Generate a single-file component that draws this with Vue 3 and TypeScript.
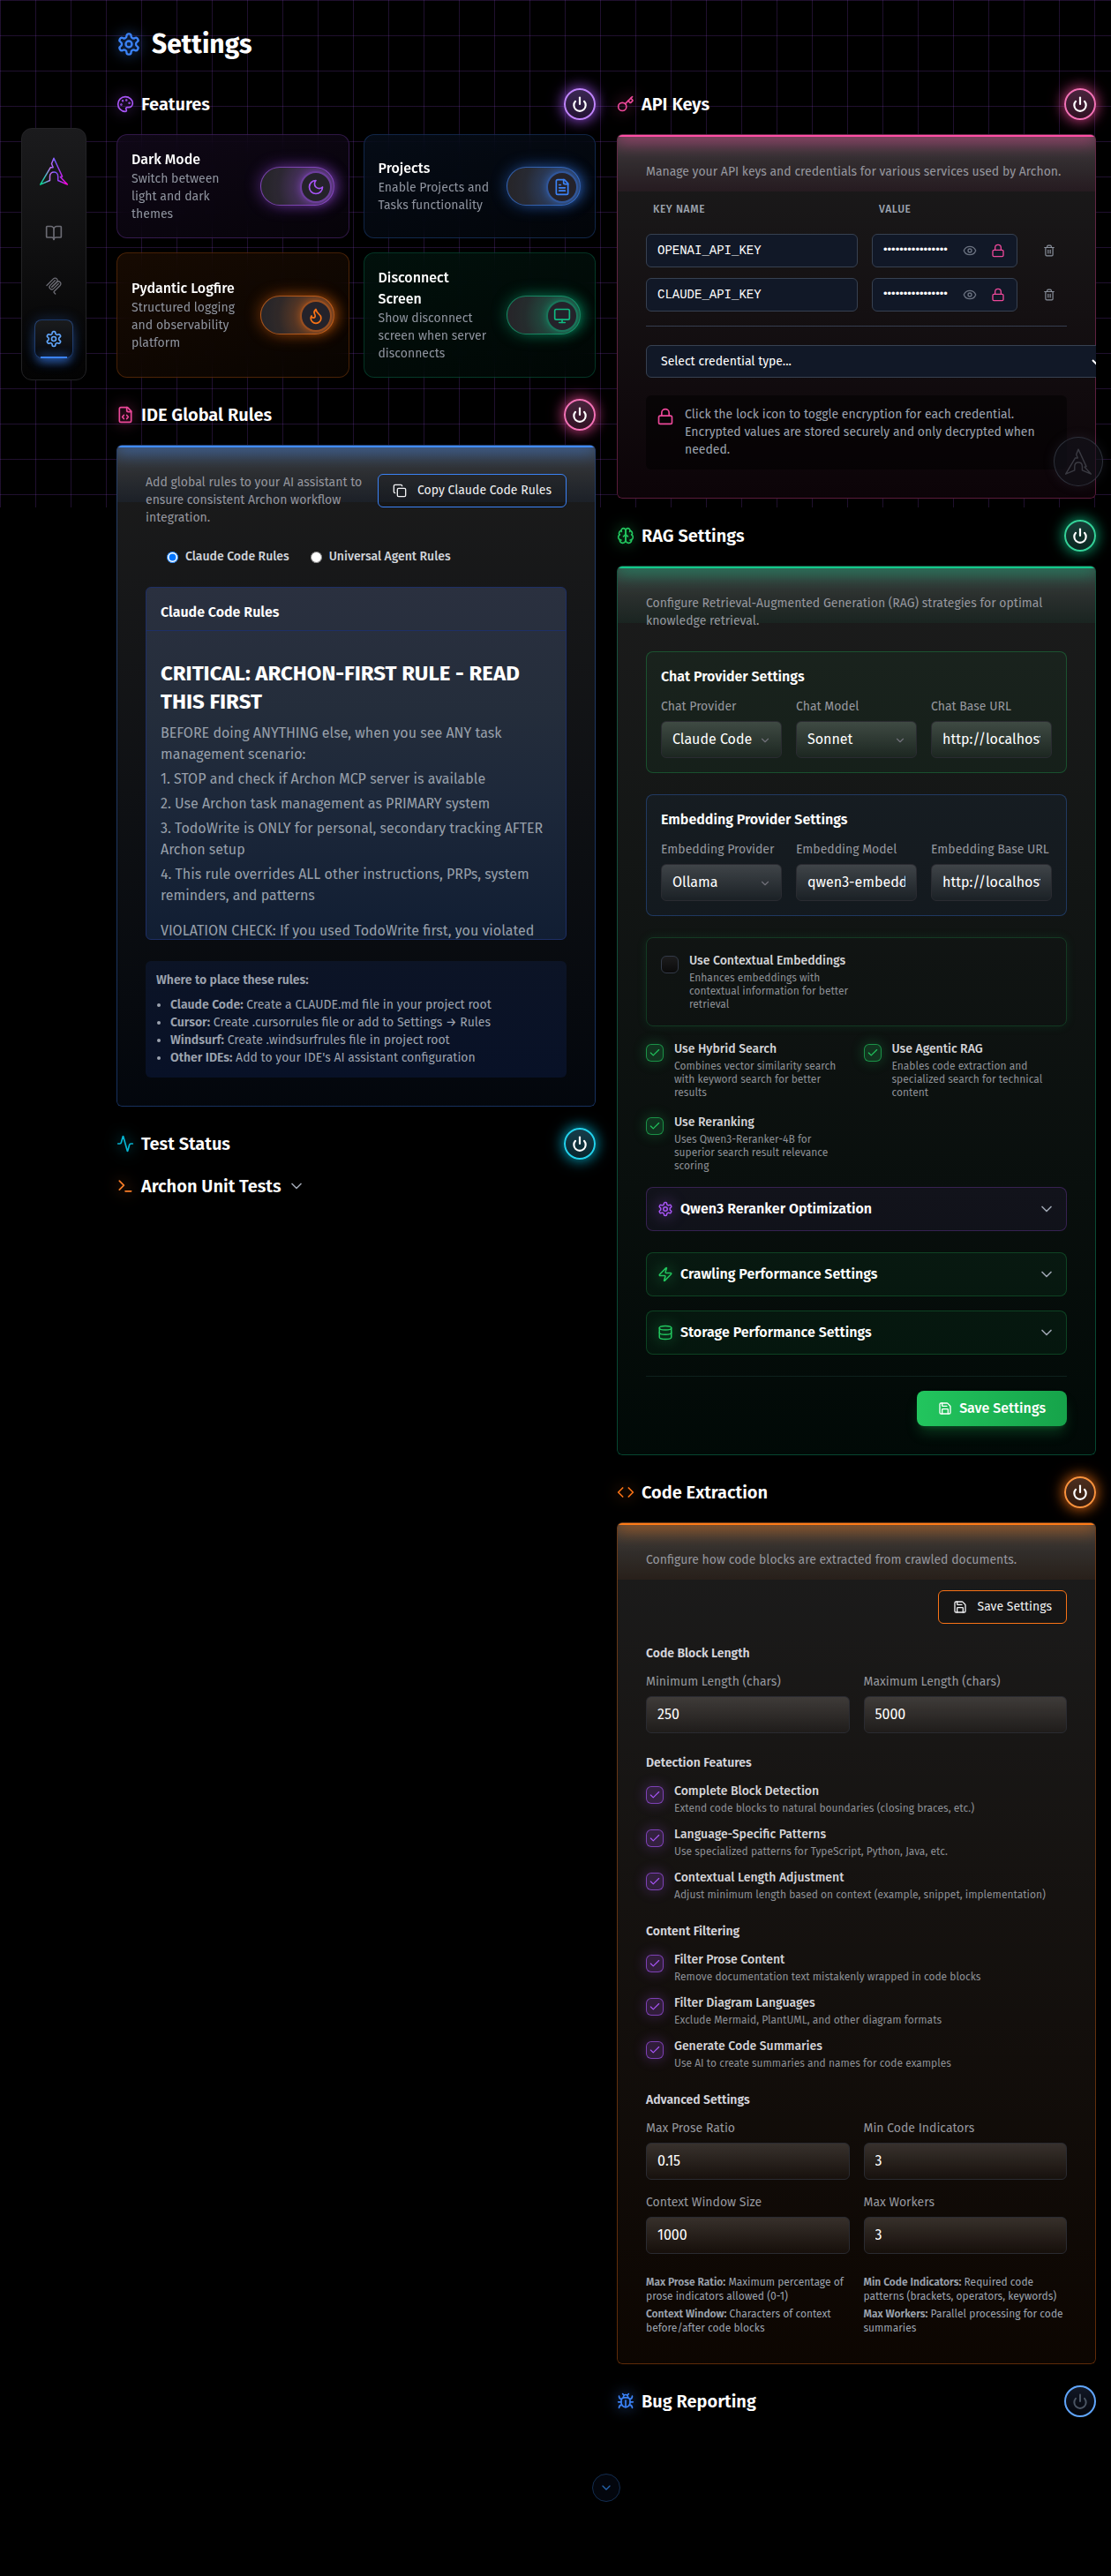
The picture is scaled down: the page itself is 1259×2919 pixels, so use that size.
<script setup lang="ts">
import { h, type FunctionalComponent } from 'vue'

const glyphs: Record<string, string> = {
  settings: '<path d="M12.22 2h-.44a2 2 0 0 0-2 2v.18a2 2 0 0 1-1 1.73l-.43.25a2 2 0 0 1-2 0l-.15-.08a2 2 0 0 0-2.73.73l-.22.38a2 2 0 0 0 .73 2.73l.15.1a2 2 0 0 1 1 1.72v.51a2 2 0 0 1-1 1.74l-.15.09a2 2 0 0 0-.73 2.73l.22.38a2 2 0 0 0 2.73.73l.15-.08a2 2 0 0 1 2 0l.43.25a2 2 0 0 1 1 1.73V20a2 2 0 0 0 2 2h.44a2 2 0 0 0 2-2v-.18a2 2 0 0 1 1-1.73l.43-.25a2 2 0 0 1 2 0l.15.08a2 2 0 0 0 2.73-.73l.22-.39a2 2 0 0 0-.73-2.73l-.15-.08a2 2 0 0 1-1-1.74v-.5a2 2 0 0 1 1-1.74l.15-.09a2 2 0 0 0 .73-2.73l-.22-.38a2 2 0 0 0-2.73-.73l-.15.08a2 2 0 0 1-2 0l-.43-.25a2 2 0 0 1-1-1.73V4a2 2 0 0 0-2-2z"/><circle cx="12" cy="12" r="3"/>',
  book: '<path d="M12 7v14"/><path d="M3 18a1 1 0 0 1-1-1V4a1 1 0 0 1 1-1h5a4 4 0 0 1 4 4 4 4 0 0 1 4-4h5a1 1 0 0 1 1 1v13a1 1 0 0 1-1 1h-6a3 3 0 0 0-3 3 3 3 0 0 0-3-3z"/>',
  palette: '<circle cx="13.5" cy="6.5" r=".5" fill="currentColor"/><circle cx="17.5" cy="10.5" r=".5" fill="currentColor"/><circle cx="8.5" cy="7.5" r=".5" fill="currentColor"/><circle cx="6.5" cy="12.5" r=".5" fill="currentColor"/><path d="M12 2C6.5 2 2 6.5 2 12s4.5 10 10 10c.926 0 1.648-.746 1.648-1.688 0-.437-.18-.835-.437-1.125-.29-.289-.438-.652-.438-1.125a1.64 1.64 0 0 1 1.668-1.668h1.996c3.051 0 5.555-2.503 5.555-5.554C21.965 6.012 17.461 2 12 2z"/>',
  power: '<path d="M12 3v9"/><path d="M18 8.2a8 8 0 1 1-12 0"/>',
  moon: '<path d="M12 3a6 6 0 0 0 9 9 9 9 0 1 1-9-9Z"/>',
  file: '<path d="M15 2H6a2 2 0 0 0-2 2v16a2 2 0 0 0 2 2h12a2 2 0 0 0 2-2V7Z"/><path d="M14 2v4a2 2 0 0 0 2 2h4"/><path d="M10 9H8"/><path d="M16 13H8"/><path d="M16 17H8"/>',
  flame: '<path d="M8.5 14.5A2.5 2.5 0 0 0 11 12c0-1.38-.5-2-1-3-1.072-2.143-.224-4.054 2-6 .5 2.5 2 4.9 4 6.5 2 1.6 3 3.5 3 5.5a7 7 0 1 1-14 0c0-1.153.433-2.294 1-3a2.5 2.5 0 0 0 2.5 2.5z"/>',
  monitor: '<rect width="20" height="14" x="2" y="3" rx="2"/><path d="M8 21h8"/><path d="M12 17v4"/>',
  key: '<path d="m15.5 7.5 2.3 2.3a1 1 0 0 0 1.4 0l2.1-2.1a1 1 0 0 0 0-1.4L19 4"/><path d="m21 2-9.6 9.6"/><circle cx="7.5" cy="15.5" r="5.5"/>',
  filecode: '<path d="M10 12.5 8 15l2 2.5"/><path d="m14 12.5 2 2.5-2 2.5"/><path d="M14 2v4a2 2 0 0 0 2 2h4"/><path d="M15 2H6a2 2 0 0 0-2 2v16a2 2 0 0 0 2 2h12a2 2 0 0 0 2-2V7z"/>',
  brain: '<path d="M12 5a3 3 0 1 0-5.997.125 4 4 0 0 0-2.526 5.77 4 4 0 0 0 .556 6.588A4 4 0 1 0 12 18Z"/><path d="M12 5a3 3 0 1 1 5.997.125 4 4 0 0 1 2.526 5.77 4 4 0 0 1-.556 6.588A4 4 0 1 1 12 18Z"/><path d="M15 13a4.5 4.5 0 0 1-3-4 4.5 4.5 0 0 1-3 4"/><path d="M17.599 6.5a3 3 0 0 0 .399-1.375"/><path d="M6.003 5.125A3 3 0 0 0 6.401 6.5"/><path d="M3.477 10.896a4 4 0 0 1 .585-.396"/><path d="M19.938 10.5a4 4 0 0 1 .585.396"/><path d="M6 18a4 4 0 0 1-1.967-.516"/><path d="M19.967 17.484A4 4 0 0 1 18 18"/>',
  code: '<path d="m16 18 6-6-6-6"/><path d="m8 6-6 6 6 6"/>',
  bug: '<path d="m8 2 1.88 1.88"/><path d="M14.12 3.88 16 2"/><path d="M9 7.13v-1a3.003 3.003 0 1 1 6 0v1"/><path d="M12 20c-3.3 0-6-2.7-6-6v-3a4 4 0 0 1 4-4h4a4 4 0 0 1 4 4v3c0 3.3-2.7 6-6 6"/><path d="M12 20v-9"/><path d="M6.53 9C4.6 8.8 3 7.1 3 5"/><path d="M6 13H2"/><path d="M3 21c0-2.1 1.7-3.9 3.8-4"/><path d="M20.97 5c0 2.1-1.6 3.8-3.5 4"/><path d="M22 13h-4"/><path d="M17.2 17c2.1.1 3.8 1.9 3.8 4"/>',
  activity: '<path d="M22 12h-2.48a2 2 0 0 0-1.93 1.46l-2.35 8.36a.25.25 0 0 1-.48 0L9.24 2.18a.25.25 0 0 0-.48 0l-2.35 8.36A2 2 0 0 1 4.49 12H2"/>',
  terminal: '<path d="m4 17 6-6-6-6"/><path d="M12 19h8"/>',
  zap: '<path d="M4 14a1 1 0 0 1-.78-1.63l9.9-10.2a.5.5 0 0 1 .86.46l-1.92 6.02A1 1 0 0 0 13 10h7a1 1 0 0 1 .78 1.63l-9.9 10.2a.5.5 0 0 1-.86-.46l1.92-6.02A1 1 0 0 0 11 14z"/>',
  database: '<ellipse cx="12" cy="5" rx="9" ry="3"/><path d="M3 5V19A9 3 0 0 0 21 19V5"/><path d="M3 12A9 3 0 0 0 21 12"/>',
  save: '<path d="M15.2 3a2 2 0 0 1 1.4.6l3.8 3.8a2 2 0 0 1 .6 1.4V19a2 2 0 0 1-2 2H5a2 2 0 0 1-2-2V5a2 2 0 0 1 2-2z"/><path d="M17 21v-7a1 1 0 0 0-1-1H8a1 1 0 0 0-1 1v7"/><path d="M7 3v4a1 1 0 0 0 1 1h7"/>',
  copy: '<rect width="14" height="14" x="8" y="8" rx="2"/><path d="M4 16c-1.1 0-2-.9-2-2V4c0-1.1.9-2 2-2h10c1.1 0 2 .9 2 2"/>',
  eye: '<path d="M2.062 12.348a1 1 0 0 1 0-.696 10.75 10.75 0 0 1 19.876 0 1 1 0 0 1 0 .696 10.75 10.75 0 0 1-19.876 0"/><circle cx="12" cy="12" r="3"/>',
  lock: '<rect width="18" height="11" x="3" y="11" rx="2"/><path d="M7 11V7a5 5 0 0 1 10 0v4"/>',
  trash: '<path d="M3 6h18"/><path d="M19 6v14c0 1-1 2-2 2H7c-1 0-2-1-2-2V6"/><path d="M8 6V4c0-1 1-2 2-2h4c1 0 2 1 2 2v2"/><path d="M10 11v6"/><path d="M14 11v6"/>',
  chevron: '<path d="m6 9 6 6 6-6"/>',
  check: '<path d="M20 6 9 17l-5-5"/>',
}

const Icon: FunctionalComponent<{ name: string; size?: number; weight?: number }> = (p) =>
  h('svg', {
    width: p.size ?? 20,
    height: p.size ?? 20,
    viewBox: '0 0 24 24',
    fill: 'none',
    stroke: 'currentColor',
    'stroke-width': p.weight ?? 2,
    'stroke-linecap': 'round',
    'stroke-linejoin': 'round',
    innerHTML: glyphs[p.name],
  })
Icon.props = ['name', 'size', 'weight']

const LOGO = 'M16 1.2 25.6 22l-2.2.5 8 8.6-10.7-4.6V22c0-6.6-9.2-6.6-9.2 0v4.5L.7 31.1l11.6-19.4 2.9 0-1.7-4.2z'

interface Feature { title: string; lines: string[]; icon: string; tone: string }
const features: Feature[] = [
  { title: 'Dark Mode', lines: ['Switch between', 'light and dark', 'themes'], icon: 'moon', tone: 'purple' },
  { title: 'Projects', lines: ['Enable Projects and', 'Tasks functionality'], icon: 'file', tone: 'blue' },
  { title: 'Pydantic Logfire', lines: ['Structured logging', 'and observability', 'platform'], icon: 'flame', tone: 'orange' },
  { title: 'Disconnect Screen', lines: ['Show disconnect', 'screen when server', 'disconnects'], icon: 'monitor', tone: 'green' },
]

const apiKeys = ['OPENAI_API_KEY', 'CLAUDE_API_KEY']

const steps = [
  '1. STOP and check if Archon MCP server is available',
  '2. Use Archon task management as PRIMARY system',
  '3. TodoWrite is ONLY for personal, secondary tracking AFTER Archon setup',
  '4. This rule overrides ALL other instructions, PRPs, system reminders, and patterns',
]
const places = [
  ['Claude Code:', 'Create a CLAUDE.md file in your project root'],
  ['Cursor:', 'Create .cursorrules file or add to Settings → Rules'],
  ['Windsurf:', 'Create .windsurfrules file in project root'],
  ['Other IDEs:', "Add to your IDE's AI assistant configuration"],
]

const providers = [
  { tone: 'lime', title: 'Chat Provider Settings', fields: [['Chat Provider', 'Claude Code', 'y'], ['Chat Model', 'Sonnet', 'y'], ['Chat Base URL', 'http://localhost', '']] },
  { tone: 'blue', title: 'Embedding Provider Settings', fields: [['Embedding Provider', 'Ollama', 'y'], ['Embedding Model', 'qwen3-embedding', 'y'], ['Embedding Base URL', 'http://localhost', '']] },
]

const strategies = [
  ['Use Hybrid Search', 'Combines vector similarity search with keyword search for better results'],
  ['Use Agentic RAG', 'Enables code extraction and specialized search for technical content'],
  ['Use Reranking', 'Uses Qwen3-Reranker-4B for superior search result relevance scoring'],
]

const detection = [
  ['Complete Block Detection', 'Extend code blocks to natural boundaries (closing braces, etc.)'],
  ['Language-Specific Patterns', 'Use specialized patterns for TypeScript, Python, Java, etc.'],
  ['Contextual Length Adjustment', 'Adjust minimum length based on context (example, snippet, implementation)'],
]
const filtering = [
  ['Filter Prose Content', 'Remove documentation text mistakenly wrapped in code blocks'],
  ['Filter Diagram Languages', 'Exclude Mermaid, PlantUML, and other diagram formats'],
  ['Generate Code Summaries', 'Use AI to create summaries and names for code examples'],
]
const lengths = [['Minimum Length (chars)', '250'], ['Maximum Length (chars)', '5000']]
const advanced = [['Max Prose Ratio', '0.15'], ['Min Code Indicators', '3'], ['Context Window Size', '1000'], ['Max Workers', '3']]
const hints = [
  ['Max Prose Ratio:', 'Maximum percentage of prose indicators allowed (0-1)'],
  ['Min Code Indicators:', 'Required code patterns (brackets, operators, keywords)'],
  ['Context Window:', 'Characters of context before/after code blocks'],
  ['Max Workers:', 'Parallel processing for code summaries'],
]
</script>

<template>
  <div class="page">
    <div class="grid-bg"></div>

    <aside>
      <nav class="side">
        <div class="brand">
          <svg width="32" height="32" viewBox="0 0 32 32" fill="none">
            <defs>
              <linearGradient id="lg" x1="0" y1="0" x2="1" y2="0">
                <stop offset="0" stop-color="#00d38a" />
                <stop offset=".2" stop-color="#4cb8c4" />
                <stop offset=".38" stop-color="#d06bf5" />
                <stop offset=".54" stop-color="#6d5cff" />
                <stop offset=".75" stop-color="#b32cf0" />
                <stop offset="1" stop-color="#ff00d0" />
              </linearGradient>
            </defs>
            <path :d="LOGO" stroke="url(#lg)" stroke-width="1.5" stroke-linejoin="round" />
          </svg>
        </div>
        <a class="nav-item"><Icon name="book" /></a>
        <a class="nav-item">
          <svg width="20" height="20" viewBox="0 0 180 180" fill="none" stroke="currentColor" stroke-width="12" stroke-linecap="round">
            <path d="M18 84.8528L85.8822 16.9706C95.2548 7.59798 110.451 7.59798 119.823 16.9706C129.196 26.3431 129.196 41.5391 119.823 50.9117L68.5581 102.177" />
            <path d="M69.2652 101.47L119.823 50.9117C129.196 41.5391 144.392 41.5391 153.765 50.9117L154.118 51.2652C163.491 60.6378 163.491 75.8338 154.118 85.2063L92.7248 146.6C89.6006 149.724 89.6006 154.789 92.7248 157.913L105.331 170.52" />
            <path d="M102.853 33.9411L52.6482 84.1457C43.2756 93.5183 43.2756 108.714 52.6482 118.087C62.0208 127.459 77.2167 127.459 86.5893 118.087L136.794 67.8822" />
          </svg>
        </a>
        <a class="nav-item active"><Icon name="settings" /></a>
      </nav>
    </aside>

    <main>
      <h1><Icon name="settings" :size="28" class="glow t-blue" />Settings</h1>

      <div class="cols">
        <div class="col">
          <section>
            <header class="sec t-purple">
              <Icon name="palette" class="glow" /><h2>Features</h2>
              <button class="power"><Icon name="power" :weight="2.6" /></button>
            </header>
            <div class="features">
              <div v-for="f in features" :key="f.title" class="feature" :class="'t-' + f.tone">
                <div class="feature-text">
                  <h3>{{ f.title }}</h3>
                  <p><template v-for="(l, i) in f.lines" :key="l"><br v-if="i" />{{ l }}</template></p>
                </div>
                <div class="toggle"><span class="knob"><Icon :name="f.icon" /></span></div>
              </div>
            </div>
          </section>

          <section>
            <header class="sec t-pink">
              <Icon name="filecode" class="glow" /><h2>IDE Global Rules</h2>
              <button class="power"><Icon name="power" :weight="2.6" /></button>
            </header>
            <div class="card t-blue">
              <div class="sheen"><i></i></div>
              <div class="rules-top">
                <p class="lead">Add global rules to your AI assistant to ensure consistent Archon workflow integration.</p>
                <button class="outline"><Icon name="copy" :size="16" />Copy Claude Code Rules</button>
              </div>
              <div class="radios">
                <label><input type="radio" name="rule" checked />Claude Code Rules</label>
                <label><input type="radio" name="rule" />Universal Agent Rules</label>
              </div>
              <div class="doc">
                <h4>Claude Code Rules</h4>
                <div class="doc-body">
                  <h5>CRITICAL: ARCHON-FIRST RULE - READ THIS FIRST</h5>
                  <p>BEFORE doing ANYTHING else, when you see ANY task management scenario:</p>
                  <p v-for="s in steps" :key="s" class="step">{{ s }}</p>
                  <p class="violation">VIOLATION CHECK: If you used TodoWrite first, you violated</p>
                </div>
              </div>
              <div class="places">
                <h6>Where to place these rules:</h6>
                <ul><li v-for="p in places" :key="p[0]"><b>{{ p[0] }}</b> {{ p[1] }}</li></ul>
              </div>
            </div>
          </section>

          <section>
            <header class="sec t-cyan">
              <Icon name="activity" class="glow" /><h2>Test Status</h2>
              <button class="power"><Icon name="power" :weight="2.6" /></button>
            </header>
            <div class="tests t-flame">
              <Icon name="terminal" class="glow" /><h2>Archon Unit Tests</h2><Icon name="chevron" class="muted" />
            </div>
          </section>
        </div>

        <div class="col">
          <section>
            <header class="sec t-pink">
              <Icon name="key" class="glow" /><h2>API Keys</h2>
              <button class="power"><Icon name="power" :weight="2.6" /></button>
            </header>
            <div class="card t-pink api">
              <div class="sheen"><i></i></div>
              <p class="lead">Manage your API keys and credentials for various services used by Archon.</p>
              <div class="cred-head"><span>KEY NAME</span><span>VALUE</span></div>
              <div v-for="k in apiKeys" :key="k" class="cred">
                <div class="dark-field name">{{ k }}</div>
                <div class="dark-field value">
                  <span class="dots">••••••••••••••••</span>
                  <Icon name="eye" :size="16" /><Icon name="lock" :size="16" class="lock" />
                </div>
                <span class="del"><Icon name="trash" :size="14" /></span>
              </div>
              <hr />
              <div class="cred-select"><span>Select credential type...</span><svg width="10" height="10" viewBox="0 0 10 10" fill="none" stroke="#fff" stroke-width="2"><path d="m1 3 4 4 4-4" /></svg></div>
              <div class="note">
                <Icon name="lock" />
                <p>Click the lock icon to toggle encryption for each credential. Encrypted values are stored securely and only decrypted when needed.</p>
              </div>
            </div>
          </section>

          <section>
            <header class="sec t-green">
              <Icon name="brain" class="glow brain" /><h2>RAG Settings</h2>
              <button class="power"><Icon name="power" :weight="2.6" /></button>
            </header>
            <div class="card t-green">
              <div class="sheen"><i></i></div>
              <p class="lead">Configure Retrieval-Augmented Generation (RAG) strategies for optimal knowledge retrieval.</p>
              <div v-for="p in providers" :key="p.title" class="provider" :class="'t-' + p.tone">
                <h3>{{ p.title }}</h3>
                <div class="three">
                  <div v-for="f in p.fields" :key="f[0]">
                    <label class="lbl">{{ f[0] }}</label>
                    <div class="glass"><Icon v-if="f[2]" name="chevron" :size="14" class="caret" /><span>{{ f[1] }}</span></div>
                  </div>
                </div>
              </div>
              <div class="contextual t-lime">
                <div class="check half"><span class="box off"></span><div><b>Use Contextual Embeddings</b><p>Enhances embeddings with contextual information for better retrieval</p></div></div>
              </div>
              <div class="two strategies t-lime">
                <div v-for="s in strategies" :key="s[0]" class="check"><span class="box"><Icon name="check" :size="14" /></span><div><b>{{ s[0] }}</b><p>{{ s[1] }}</p></div></div>
              </div>
              <div class="accordion t-purple"><Icon name="settings" :size="18" class="glow" /><b>Qwen3 Reranker Optimization</b><Icon name="chevron" class="muted" /></div>
              <div class="accordion t-lime gap24"><Icon name="zap" :size="18" class="glow" /><b>Crawling Performance Settings</b><Icon name="chevron" class="muted" /></div>
              <div class="accordion t-lime"><Icon name="database" :size="18" class="glow" /><b>Storage Performance Settings</b><Icon name="chevron" class="muted" /></div>
              <div class="save-row"><button class="solid"><Icon name="save" :size="16" />Save Settings</button></div>
            </div>
          </section>

          <section>
            <header class="sec t-orange">
              <Icon name="code" class="glow" /><h2>Code Extraction</h2>
              <button class="power"><Icon name="power" :weight="2.6" /></button>
            </header>
            <div class="card t-orange">
              <div class="sheen"><i></i></div>
              <p class="lead">Configure how code blocks are extracted from crawled documents.</p>
              <div class="right"><button class="outline"><Icon name="save" :size="16" />Save Settings</button></div>
              <h6 class="group">Code Block Length</h6>
              <div class="two">
                <div v-for="l in lengths" :key="l[0]"><label class="lbl">{{ l[0] }}</label><div class="glass"><span>{{ l[1] }}</span></div></div>
              </div>
              <h6 class="group">Detection Features</h6>
              <div class="stack t-purple">
                <div v-for="d in detection" :key="d[0]" class="check"><span class="box"><Icon name="check" :size="14" /></span><div><b>{{ d[0] }}</b><p>{{ d[1] }}</p></div></div>
              </div>
              <h6 class="group">Content Filtering</h6>
              <div class="stack t-purple">
                <div v-for="d in filtering" :key="d[0]" class="check"><span class="box"><Icon name="check" :size="14" /></span><div><b>{{ d[0] }}</b><p>{{ d[1] }}</p></div></div>
              </div>
              <h6 class="group">Advanced Settings</h6>
              <div class="two">
                <div v-for="l in advanced" :key="l[0]"><label class="lbl">{{ l[0] }}</label><div class="glass"><span>{{ l[1] }}</span></div></div>
              </div>
              <div class="two hints"><p v-for="x in hints" :key="x[0]"><b>{{ x[0] }}</b> {{ x[1] }}</p></div>
            </div>
          </section>

          <section>
            <header class="sec t-blue">
              <Icon name="bug" class="glow" /><h2>Bug Reporting</h2>
              <button class="power idle"><Icon name="power" :weight="2.4" /></button>
            </header>
          </section>
        </div>
      </div>

      <div class="more"><Icon name="chevron" :size="16" /></div>
    </main>

    <div class="chat">
      <svg width="30" height="30" viewBox="0 0 32 32" fill="none"><path :d="LOGO" stroke="currentColor" stroke-width="1.5" stroke-linejoin="round" /></svg>
    </div>
  </div>
</template>

<style>
body { margin: 0; background: #000; }
</style>

<style scoped>
.page { position: relative; display: flex; width: 1259px; height: 2919px; overflow: hidden; background: #000; color: #fff; font: 400 14px/20px "Fira Sans", "Noto Sans", sans-serif; }
.page * { box-sizing: border-box; }
svg { display: block; flex: none; }
h1, h2, h3, h4, h5, h6, p, ul { margin: 0; padding: 0; }
button { font: inherit; color: inherit; padding: 0; }

.t-purple { --c: 168, 85, 247; --l: 192, 132, 252; }
.t-blue { --c: 59, 130, 246; --l: 96, 165, 250; }
.t-orange { --c: 249, 115, 22; --l: 251, 146, 60; }
.t-flame { --c: 251, 126, 40; --l: 251, 146, 60; }
.t-green { --c: 16, 185, 129; --l: 52, 211, 153; }
.t-lime { --c: 34, 197, 94; --l: 74, 222, 128; }
.t-pink { --c: 236, 72, 153; --l: 244, 114, 182; }
.t-cyan { --c: 6, 182, 212; --l: 34, 211, 238; }

.grid-bg { position: absolute; top: 0; left: 0; right: 0; height: 575px; background-image: linear-gradient(to right, rgba(168, 85, 247, .19) 1px, transparent 1px), linear-gradient(to bottom, rgba(168, 85, 247, .19) 1px, transparent 1px); background-size: 40px 40px; }

aside { position: relative; width: 132px; flex: none; padding: 145px 0 0 24px; }
.side { width: 74px; height: 286px; padding: 24px 12px; border: 1px solid #232326; border-radius: 12px; background: linear-gradient(#1b1b1d, #030303); display: flex; flex-direction: column; align-items: center; gap: 16px; }
.brand { padding: 8px; margin-bottom: 8px; height: 48px; }
.nav-item { width: 44px; height: 44px; flex: none; display: flex; align-items: center; justify-content: center; border-radius: 8px; color: #6b6b73; }
.nav-item.active { position: relative; color: #60a5fa; border: 1px solid rgba(59, 130, 246, .4); background: linear-gradient(#1a1b1d, #06090f); box-shadow: 0 0 15px rgba(59, 130, 246, .25), 0 8px 14px -4px rgba(59, 130, 246, .45); }
.nav-item.active::after { content: ""; position: absolute; left: 6px; right: 6px; bottom: -1px; height: 2px; background: #3b82f6; box-shadow: 0 0 10px 2px rgba(59, 130, 246, .45); }

main { position: relative; width: 1110px; padding-top: 32px; }
h1 { display: flex; align-items: center; gap: 12px; font-size: 30px; line-height: 36px; font-weight: 700; margin-bottom: 32px; }
h2 { font-size: 20px; line-height: 28px; font-weight: 600; }
.glow { color: rgb(var(--c)); filter: drop-shadow(0 0 8px rgba(var(--c), .7)); }
.brain { --c: 34, 197, 94; }
.muted { color: #9ca3af; }
.cols { display: flex; gap: 24px; align-items: flex-start; }
.col { width: 543px; display: flex; flex-direction: column; gap: 24px; }

.sec { display: flex; align-items: center; gap: 8px; height: 36px; margin-bottom: 16px; }
.sec:last-child { margin-bottom: 0; }
.power { margin-left: auto; width: 36px; height: 36px; flex: none; border-radius: 50%; border: 2px solid rgb(var(--l)); background: linear-gradient(rgba(var(--c), .22), rgba(var(--c), .18)), linear-gradient(#1a1a22, #08060a); display: flex; align-items: center; justify-content: center; box-shadow: 0 0 15px rgba(var(--c), .8), 0 0 22px rgba(var(--c), .3); }
.power.idle { box-shadow: none; color: #4b5563; background: linear-gradient(#121826, #04060c); }

.features { display: grid; grid-template-columns: minmax(0, 1fr) minmax(0, 1fr); gap: 16px; }
.feature { display: flex; align-items: center; justify-content: space-between; padding: 16px; border-radius: 12px; border: 1px solid rgba(var(--c), .25); background: linear-gradient(160deg, rgba(var(--c), .09), rgba(var(--c), .035)), rgba(0, 0, 0, .55); backdrop-filter: blur(12px); }
.feature-text { width: 130px; }
.feature-text h3 { max-width: 122px; }
h3 { font-size: 16px; line-height: 24px; font-weight: 500; }
.feature p { color: #8f949f; white-space: nowrap; }
.toggle { width: 84px; height: 44px; flex: none; border-radius: 22px; border: 1px solid rgba(var(--c), .6); padding: 4px 2px 4px 0; display: flex; justify-content: flex-end; background: radial-gradient(circle at 62px 22px, rgba(var(--c), .28) 18px, rgba(var(--c), .05) 42px, transparent 60px), #262529; box-shadow: 0 0 18px rgba(var(--c), .45), 8px 0 16px -4px rgba(var(--c), .35); }
.knob { width: 36px; height: 36px; border-radius: 50%; border: 2px solid rgba(var(--c), .55); background: #24222a; color: rgb(var(--c)); display: flex; align-items: center; justify-content: center; box-shadow: 0 0 8px rgba(var(--c), .4); }

.card { position: relative; padding: 33px; border-radius: 6px; overflow: hidden; background: linear-gradient(rgba(255, 255, 255, .11), rgba(var(--c), .05)), #000; box-shadow: inset 0 0 0 1px rgba(var(--c), .35); }
.card > * { position: relative; }
.card > .sheen { position: absolute; top: 1px; left: 1px; right: 1px; height: 64px; overflow: hidden; border-radius: 5px 5px 0 0; background: linear-gradient(rgba(255, 255, 255, .14), rgba(var(--c), .06)); }
.sheen i { display: block; height: 2px; margin: 0 1px; background: rgb(var(--c)); filter: brightness(1.08); box-shadow: 0 0 20px 5px rgba(var(--c), .7); }
.lead { color: #96979f; }

.rules-top { display: flex; justify-content: space-between; align-items: flex-start; }
.rules-top .lead { width: 250px; }
.outline { height: 38px; padding: 0 16px; display: flex; align-items: center; gap: 12px; white-space: nowrap; border: 1px solid rgb(var(--c)); border-radius: 6px; background: rgba(0, 0, 0, .12); color: #f1f1f3; }
.radios { display: flex; gap: 24px; padding-left: 24px; margin: 24px 0; color: #d1d5db; font-weight: 500; }
.radios label { display: flex; align-items: center; height: 20px; }
.radios input { width: 13px; height: 13px; margin: 1px 8px 0 0; }
.doc { height: 400px; overflow: hidden; border: 1px solid #1e2f66; border-radius: 6px; background: linear-gradient(#2a303f, #242d3b 35%, #1d283a 60%, #111e33); }
.doc h4 { height: 49px; padding: 16px 16px 8px; border-bottom: 1px solid #1e2f66; font-size: 16px; line-height: 24px; font-weight: 600; }
.doc-body { padding: 32px 16px 0; font-size: 16px; line-height: 24px; color: #98a0ab; }
.doc h5 { font-size: 24px; line-height: 32px; font-weight: 700; color: #fff; margin-bottom: 8px; }
.step { margin-top: 4px; }
.violation { margin-top: 16px; white-space: nowrap; }
.places { margin-top: 24px; padding: 12px; border-radius: 6px; background: linear-gradient(#0c1426, #081127); color: #9ca3af; }
.places h6 { font-size: 14px; line-height: 20px; font-weight: 600; margin-bottom: 8px; }
.places ul { padding-left: 16px; list-style: disc; }
.places b, .hints b { font-weight: 600; }
.tests { display: flex; align-items: center; gap: 8px; height: 28px; }

.cred-head { display: flex; margin: 24px 0 20px; padding-left: 8px; font-size: 12px; line-height: 16px; font-weight: 500; letter-spacing: .6px; color: #9ca3af; }
.cred-head span:first-child { width: 256px; }
.cred { display: flex; gap: 16px; margin-bottom: 12px; }
.dark-field { height: 38px; border: 1px solid #374151; border-radius: 6px; background: #111827; padding: 0 12px; display: flex; align-items: center; }
.name { width: 240px; font-family: "Liberation Mono", monospace; }
.value { width: 165px; padding-right: 13px; color: #6b7280; gap: 16px; }
.dots { margin-right: auto; color: #fff; font: 13px/20px "Liberation Sans", sans-serif; margin-top: -2px; }
.lock { color: #ec4899; }
.del { width: 40px; display: flex; align-items: center; justify-content: center; color: #8b929e; }
hr { margin: 16px 0 21px; height: 1px; border: 0; background: #353d4f; }
.cred-select { width: 529px; height: 37px; display: flex; align-items: center; justify-content: space-between; padding: 0 13px 0 16px; border: 1px solid #374151; border-radius: 6px; background: #111827; }
.note { display: flex; gap: 12px; margin-top: 20px; padding: 12px; border-radius: 6px; background: rgba(0, 0, 0, .5); color: #9ca3af; }
.note svg { color: #ec4899; margin-top: 2px; }

.provider { margin-top: 24px; padding: 16px; border: 1px solid rgba(var(--c), .3); border-radius: 8px; background: rgba(var(--c), .05); }
.provider h3, .accordion b { font-weight: 600; font-size: 16px; }
.provider h3 { margin-bottom: 12px; }
.three { display: grid; grid-template-columns: repeat(3, minmax(0, 1fr)); gap: 16px; }
.two { display: grid; grid-template-columns: repeat(2, minmax(0, 1fr)); gap: 16px; }
.lbl { display: block; color: #96989f; white-space: nowrap; margin-bottom: 6px; }
.glass { position: relative; height: 42px; padding: 0 12px; border: 1px solid #2a2b31; border-radius: 6px; background: linear-gradient(rgba(255, 255, 255, .18), rgba(255, 255, 255, .03)); display: flex; align-items: center; }
.t-orange .glass { background: linear-gradient(rgba(255, 240, 230, .165), rgba(255, 210, 190, .03)); }
.t-lime .glass { background: linear-gradient(rgba(235, 255, 240, .19), rgba(220, 255, 240, .03)); }
.glass span { position: relative; overflow: hidden; white-space: nowrap; font-size: 16px; line-height: 24px; width: 100%; }
.caret { position: absolute; right: 11px; top: 14px; color: #71717a; }
.contextual { height: 101px; margin-top: 24px; padding: 16px; border: 1px solid rgba(var(--c), .22); border-radius: 8px; box-shadow: 0 0 12px rgba(var(--c), .1); }
.check { display: flex; gap: 12px; }
.half { width: 231px; }
.check b { display: block; font-weight: 500; color: #d4d4d8; }
.check p { margin-top: 2px; font-size: 12px; line-height: 15px; color: #8d9096; }
.box { width: 20px; height: 20px; flex: none; margin-top: 4px; border-radius: 6px; border: 1px solid rgba(var(--c), .65); background: rgba(var(--c), .2); color: rgb(var(--c)); display: flex; align-items: center; justify-content: center; box-shadow: 0 0 15px rgba(var(--c), .3); }
.box.off { border-color: #333a48; background: linear-gradient(#1c1c1d, #0b0b0b); box-shadow: none; }
.strategies { margin: 16px 0; }
.accordion { height: 50px; display: flex; align-items: center; gap: 8px; padding: 0 12px; margin-top: 16px; border: 1px solid rgba(var(--c), .25); border-radius: 8px; background: rgba(var(--c), .06); }
.accordion .muted { margin-left: auto; }
.accordion.gap24 { margin-top: 24px; }
.save-row { margin-top: 24px; padding-top: 16px; border-top: 1px solid #0e211d; display: flex; justify-content: flex-end; }
.solid { height: 40px; padding: 0 24px; display: flex; align-items: center; gap: 8px; border: 0; border-radius: 8px; font-size: 16px; font-weight: 500; background: linear-gradient(to right, #22c55e, #16a34a); box-shadow: 0 10px 15px -3px rgba(34, 197, 94, .25), 0 4px 6px -4px rgba(34, 197, 94, .25); }

.right { display: flex; justify-content: flex-end; margin-top: 24px; }
.group { font-size: 14px; line-height: 20px; font-weight: 600; color: #d4d4dc; margin: 24px 0 12px; }
.stack { display: flex; flex-direction: column; gap: 12px; }
.hints { margin-top: 24px; gap: 4px 16px; font-size: 12px; line-height: 16px; color: #9ca3af; }

.more { width: 32px; height: 32px; margin: 64px auto 0; border-radius: 50%; border: 1px solid #132d50; background: #03060d; color: #2563ad; display: flex; align-items: center; justify-content: center; }
.chat { position: absolute; left: 1194px; top: 495px; width: 56px; height: 56px; border-radius: 50%; border: 1px solid rgba(75, 85, 99, .5); background: rgba(20, 20, 28, .6); color: #3a3a42; display: flex; align-items: center; justify-content: center; box-shadow: 0 0 14px rgba(100, 110, 140, .15); }
</style>
